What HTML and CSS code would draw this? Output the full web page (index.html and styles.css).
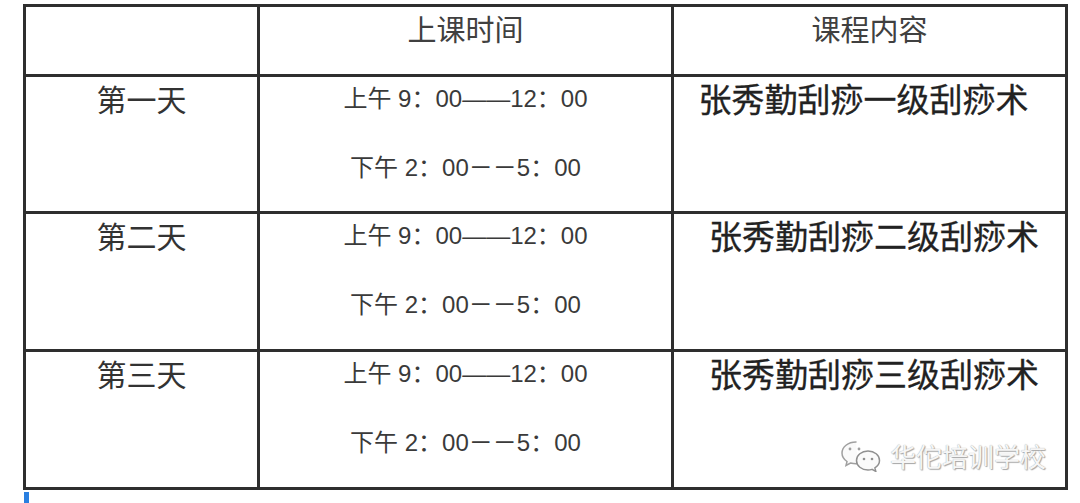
FILE: index.html
```html
<!DOCTYPE html>
<html lang="zh-CN">
<head>
<meta charset="utf-8">
<title>课程安排</title>
<link rel="stylesheet" href="styles.css">
</head>
<body>
<div class="page">
  <div class="schedule">
    <div class="cell head"></div>
    <div class="cell head">上课时间</div>
    <div class="cell head">课程内容</div>

    <div class="cell day">第一天</div>
    <div class="cell time">
      <div class="line">上午 9：00——12：00</div>
      <div class="line">下午 2：00－－5：00</div>
    </div>
    <div class="cell course">张秀勤刮痧一级刮痧术</div>

    <div class="cell day">第二天</div>
    <div class="cell time">
      <div class="line">上午 9：00——12：00</div>
      <div class="line">下午 2：00－－5：00</div>
    </div>
    <div class="cell course indent">张秀勤刮痧二级刮痧术</div>

    <div class="cell day">第三天</div>
    <div class="cell time">
      <div class="line">上午 9：00——12：00</div>
      <div class="line">下午 2：00－－5：00</div>
    </div>
    <div class="cell course indent">张秀勤刮痧三级刮痧术</div>

    <div class="watermark">
      <svg class="wx" width="42" height="32" viewBox="0 0 42 32">
        <path d="M16 2C8 2 2 7 2 13c0 3.5 2 6.5 5 8.5l-1 4 4.5-2.5c1.8.5 3.6.8 5.5.8 0.6 0 1.2 0 1.8-.1" fill="#fafafa" stroke="#a0a0a0" stroke-width="1.5" stroke-linecap="round"/>
        <path d="M28 11c-6.5 0-11.5 4.2-11.5 9.5S21.5 30 28 30c1.4 0 2.7-.2 4-.6l3.8 2-.9-3.5c2.8-1.8 4.6-4.5 4.6-7.4C39.5 15.2 34.5 11 28 11z" fill="#fafafa" stroke="#909090" stroke-width="1.5"/>
        <circle cx="10" cy="9" r="1.4" fill="#a0a0a0"/>
        <circle cx="19" cy="9" r="1.4" fill="#a0a0a0"/>
        <circle cx="24" cy="19" r="1.3" fill="#909090"/>
        <circle cx="32" cy="19" r="1.3" fill="#909090"/>
      </svg>
      <span class="wm-text">华佗培训学校</span>
    </div>
  </div>
  <div class="mark"></div>
</div>
</body>
</html>
```

FILE: styles.css
```css
html, body {
  margin: 0;
  padding: 0;
  background: #ffffff;
}

.page {
  padding: 4px 0 0 23px;
  width: 1045px;
}

.schedule {
  position: relative;
  display: grid;
  grid-template-columns: 231px 411px 391px;
  grid-template-rows: 67px 134px 135px 135px;
  gap: 3px;
  padding: 3px;
  background: #2e2e2e;
  font-family: "Liberation Sans", "Noto Sans CJK SC", sans-serif;
  color: #3c3c3c;
}

.cell {
  background: #ffffff;
  text-align: center;
}

.head {
  font-size: 29px;
  line-height: 36px;
  padding-top: 3px;
  color: #404040;
  font-family: "Noto Sans CJK SC", sans-serif;
}

.day {
  font-size: 30px;
  line-height: 36px;
  padding-top: 3px;
  color: #333333;
  font-family: "Noto Sans CJK SC", sans-serif;
}

.time {
  display: flex;
  flex-direction: column;
  align-items: center;
  gap: 33px;
  padding-top: 4px;
  font-size: 24px;
  color: #3a3a3a;
}

.line {
  line-height: 36px;
  white-space: nowrap;
}

.course {
  font-size: 33px;
  line-height: 40px;
  padding: 1px 12px 0 0;
  font-weight: 400;
  color: #222222;
  -webkit-text-stroke: 0.3px #222222;
  font-family: "Noto Sans CJK SC", sans-serif;
  white-space: nowrap;
}

.indent {
  padding: 1px 0 0 9px;
}

.watermark {
  position: absolute;
  left: 817px;
  top: 436px;
  display: flex;
  align-items: center;
  gap: 8px;
}

.wm-text {
  font-family: "Noto Sans CJK SC", sans-serif;
  font-size: 26px;
  line-height: 32px;
  color: #f6f6f6;
  text-shadow: 0 0 1px #999999, 1px 1px 1px #a8a8a8;
}

.mark {
  width: 5px;
  height: 11px;
  margin-top: 2px;
  margin-left: 1px;
  background: #2a7fe0;
}
```
